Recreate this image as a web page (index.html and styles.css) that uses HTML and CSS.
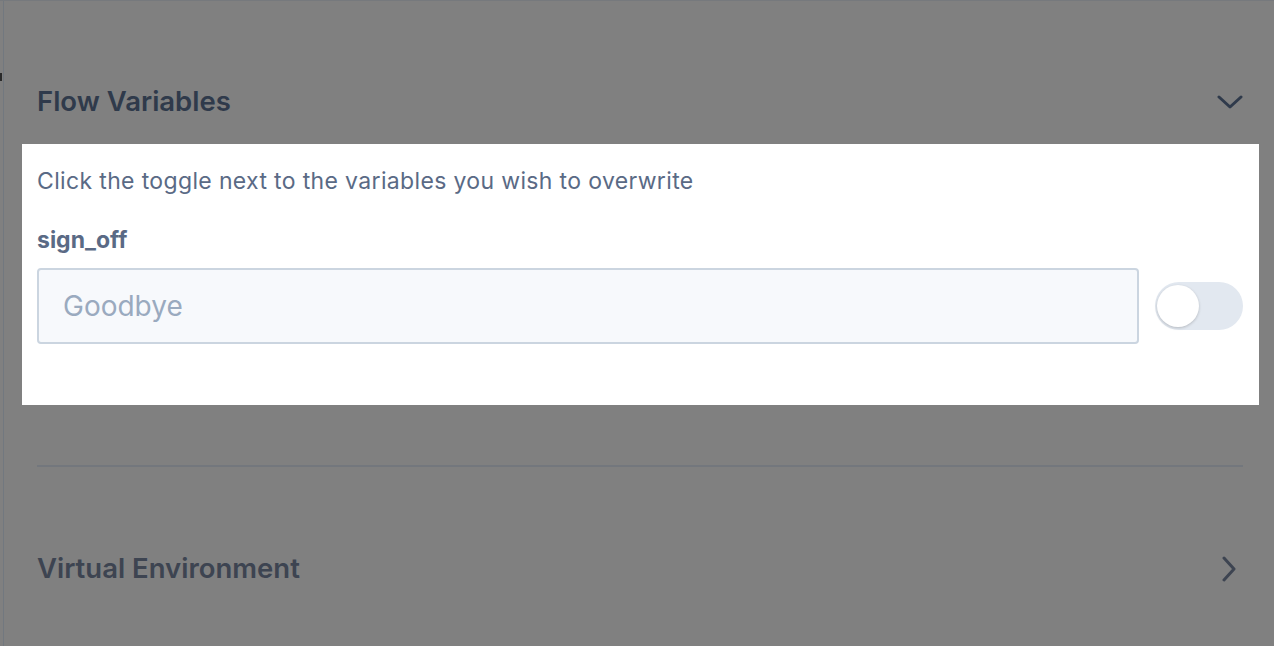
FILE: index.html
```html
<!DOCTYPE html>
<html lang="en">
<head>
<meta charset="utf-8">
<title>Flow Variables</title>
<link rel="stylesheet" href="styles.css">
</head>
<body>
<div class="page">
  <span class="edge-mark"></span>
  <main class="content">
    <section class="section">
      <header class="section-head">
        <h2 class="section-title">Flow Variables</h2>
        <svg class="chevron" width="26" height="16" viewBox="0 0 26 16" aria-hidden="true">
          <path d="M2 3 L13 13 L24 3" fill="none" stroke="currentColor" stroke-width="3" stroke-linecap="round" stroke-linejoin="round"/>
        </svg>
      </header>
      <div class="spotlight">
        <p class="hint">Click the toggle next to the variables you wish to overwrite</p>
        <label class="var-label" for="sign_off">sign_off</label>
        <div class="var-row">
          <input class="var-input" id="sign_off" type="text" placeholder="Goodbye">
          <span class="toggle"><span class="knob"></span></span>
        </div>
      </div>
    </section>
    <hr class="divider">
    <section class="section">
      <header class="section-head muted">
        <h2 class="section-title">Virtual Environment</h2>
        <svg class="chevron-right" width="16" height="26" viewBox="0 0 16 26" aria-hidden="true">
          <path d="M3 2 L13 13 L3 24" fill="none" stroke="currentColor" stroke-width="3" stroke-linecap="round" stroke-linejoin="round"/>
        </svg>
      </header>
    </section>
  </main>
</div>
</body>
</html>
```

FILE: styles.css
```css
* { box-sizing: border-box; }
html, body { margin: 0; padding: 0; }
body {
  background: #808080;
  font-family: "Inter", "Lato", sans-serif;
  width: 1274px;
  height: 646px;
  overflow: hidden;
}
.page {
  position: relative;
  height: 646px;
  border-top: 1px solid #76797d;
  padding-left: 3px;
}
.edge-mark {
  position: absolute;
  left: 0;
  top: 72px;
  width: 2px;
  height: 8px;
  background: #2a2a2a;
}
.content {
  height: 100%;
  border-left: 1px solid #72787f;
  padding: 0 31px 0 33px;
}
.section-head {
  display: flex;
  align-items: center;
  justify-content: space-between;
  height: 142px;
  padding-top: 59px;
  color: #2f3a4b;
}
.section-title {
  margin: 0;
  font-size: 27.5px;
  font-weight: 600;
  line-height: 1;
}
.spotlight {
  background: #ffffff;
  margin: 1px -16px 0 -15px;
  padding: 22px 16px 60px 15px;
  height: 261px;
}
.hint {
  margin: 0;
  font-size: 23px;
  letter-spacing: 0.35px;
  line-height: 30px;
  color: #5a6a85;
}
.var-label {
  display: block;
  margin-top: 30px;
  font-size: 23px;
  font-weight: 700;
  line-height: 28px;
  color: #5a6a85;
}
.var-row {
  display: flex;
  align-items: center;
  gap: 16px;
  margin-top: 14px;
}
.var-input {
  flex: 1;
  height: 76px;
  border: 2px solid #cbd5e0;
  border-radius: 4px;
  background: #f7f9fc;
  padding: 0 24px;
  font-family: inherit;
  font-size: 28px;
  color: #4a5568;
  outline: none;
}
.var-input::placeholder { color: #9aaabf; }
.toggle {
  position: relative;
  width: 88px;
  height: 48px;
  border-radius: 24px;
  background: #e2e8f0;
  flex: none;
}
.knob {
  position: absolute;
  left: 2px;
  top: 3px;
  width: 42px;
  height: 42px;
  border-radius: 50%;
  background: #ffffff;
  box-shadow: 0 1px 3px rgba(0, 0, 0, 0.2);
}
.divider {
  margin: 60px 0 0 0;
  border: 0;
  border-top: 2px solid #73777d;
}
.section-head.muted {
  color: #3d4451;
  height: auto;
  padding-top: 88px;
}
.chevron-right { margin-right: 6px; }
```
